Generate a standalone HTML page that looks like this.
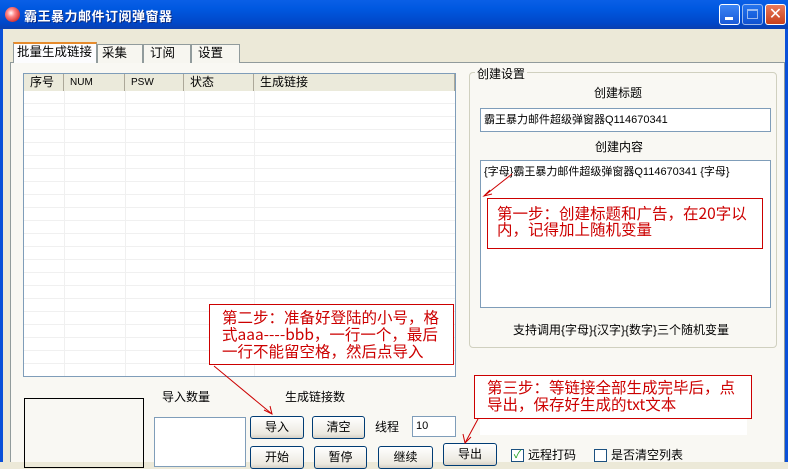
<!DOCTYPE html>
<html><head><meta charset="utf-8"><style>
*{box-sizing:border-box;margin:0;padding:0}
body{width:788px;height:462px;overflow:hidden;background:#ece9d8;font-family:"Liberation Sans","Noto Sans CJK SC",sans-serif;font-size:12px;color:#000;position:relative}
.a{position:absolute}
.tb{left:0;top:0;width:788px;height:29px;background:linear-gradient(#0a5fe6,#0058e0 30%,#0047c8 80%,#0a3fb0);}
.ttl{left:24px;top:6px;color:#fff;font-weight:bold;font-size:13px;letter-spacing:0.5px;text-shadow:1px 1px #0a2a80}
.wb{top:4px;width:21px;height:21px;border:1px solid #fff;border-radius:3px;background:linear-gradient(#3c85f5,#1a5ad8)}
.in{background:#fff;border:1px solid #7f9db9}
.btn{height:23px;border:1px solid #003c74;border-radius:3px;background:linear-gradient(#fff,#ece9e0 80%,#d6d0c5);text-align:center;line-height:21px}
.note{border:1px solid #c00;color:#c00;font-size:15.5px;line-height:16px;background:#fff;white-space:nowrap;font-family:"Noto Sans CJK SC",sans-serif}
.th{top:0;height:17px;border-right:1px solid #aca899;padding-left:6px;line-height:17px;background:#ebeadb}
.tab{top:44px;height:19px;border:1px solid #919b9c;border-bottom:none;background:#f7f6f0;padding:0 4px;line-height:17px;font-size:12.5px;white-space:nowrap;overflow:hidden}
.cb{width:13px;height:13px;border:1px solid #1c5180;background:#fff}
</style></head><body>
<div class="a tb"></div>
<div class="a" style="left:5px;top:7px;width:15px;height:15px;border-radius:50%;background:radial-gradient(circle at 40% 40%,#fff 0,#f88 30%,#c22 80%)"></div>
<div class="a ttl">霸王暴力邮件订阅弹窗器</div>
<div class="a wb" style="left:719px"><div class="a" style="left:5px;top:12px;width:8px;height:3px;background:#fff"></div></div>
<div class="a wb" style="left:742px;opacity:.6"><div class="a" style="left:4px;top:4px;width:11px;height:10px;border:1px solid #fff;border-top-width:2px"></div></div>
<div class="a wb" style="left:765px;background:linear-gradient(#e87a5a,#c8401c);color:#fff;text-align:center;font-size:16px;line-height:19px">✕</div>
<div class="a" style="left:0;top:29px;width:3px;height:433px;background:#0a50d8"></div>
<div class="a" style="left:785px;top:29px;width:3px;height:433px;background:#0a50d8"></div>

<div class="a" style="left:10px;top:62px;width:775px;height:400px;border:1px solid #919b9c;border-bottom:none;background:#f9f8f3"></div>
<div class="a tab" style="left:13px;top:42px;height:21px;width:84px;padding:0 3px;background:#fcfcfe;border-top:2px solid #e68b2c">批量生成链接</div>
<div class="a tab" style="left:97px;width:46px">采集</div>
<div class="a tab" style="left:143px;width:48px;padding-left:6px">订阅</div>
<div class="a tab" style="left:191px;width:49px;padding-left:6px">设置</div>

<div class="a in" style="left:23px;top:73px;width:433px;height:304px;border-color:#7f9db9">
 <div class="a th" style="left:0;width:40px">序号</div>
 <div class="a th" style="left:40px;width:61px;font-size:10px">NUM</div>
 <div class="a th" style="left:101px;width:59px;font-size:10px">PSW</div>
 <div class="a th" style="left:160px;width:70px">状态</div>
 <div class="a th" style="left:230px;width:201px">生成链接</div>
 <div class="a" style="left:0;top:17px;width:431px;height:285px;background:repeating-linear-gradient(#fff 0 12px,#f0f0f0 12px 13px)"></div>
 <div class="a" style="left:40px;top:17px;width:1px;height:285px;background:#f0f0f0"></div>
 <div class="a" style="left:101px;top:17px;width:1px;height:285px;background:#f0f0f0"></div>
 <div class="a" style="left:160px;top:17px;width:1px;height:285px;background:#f0f0f0"></div>
 <div class="a" style="left:230px;top:17px;width:1px;height:285px;background:#f0f0f0"></div>
</div>

<div class="a" style="left:469px;top:72px;width:308px;height:276px;border:1px solid #d0d0bf;border-radius:4px"></div>
<div class="a" style="left:475px;top:65px;background:#f9f8f3;padding:0 2px">创建设置</div>
<div class="a" style="left:594px;top:84px">创建标题</div>
<div class="a in" style="left:480px;top:108px;width:291px;height:24px;padding:2px 3px;font-size:11px">霸王暴力邮件超级弹窗器Q114670341</div>
<div class="a" style="left:595px;top:138px">创建内容</div>
<div class="a in" style="left:480px;top:160px;width:291px;height:148px;padding:2px 3px;font-size:11px">{字母}霸王暴力邮件超级弹窗器Q114670341 {字母}</div>
<div class="a note" style="left:487px;top:198px;width:276px;height:51px;padding:6px 9px">第一步：创建标题和广告，在20字以<br>内，记得加上随机变量</div>
<div class="a" style="left:513px;top:321px">支持调用{字母}{汉字}{数字}三个随机变量</div>

<div class="a" style="left:24px;top:398px;width:120px;height:70px;border:1px solid #000"></div>
<div class="a" style="left:162px;top:388px">导入数量</div>
<div class="a" style="left:285px;top:388px">生成链接数</div>
<div class="a in" style="left:154px;top:417px;width:92px;height:50px"></div>
<div class="a btn" style="left:250px;top:416px;width:54px">导入</div>
<div class="a btn" style="left:312px;top:416px;width:53px">清空</div>
<div class="a" style="left:375px;top:418px">线程</div>
<div class="a in" style="left:412px;top:416px;width:44px;height:21px;padding:3px;font-size:11px">10</div>
<div class="a in" style="left:480px;top:410px;width:267px;height:25px;border:none"></div>
<div class="a btn" style="left:250px;top:446px;width:54px">开始</div>
<div class="a btn" style="left:314px;top:446px;width:53px">暂停</div>
<div class="a btn" style="left:378px;top:446px;width:55px">继续</div>
<div class="a btn" style="left:443px;top:443px;width:54px">导出</div>
<div class="a cb" style="left:511px;top:449px;color:#21a121;font-size:11px;line-height:11px;text-align:center">✓</div>
<div class="a" style="left:528px;top:446px">远程打码</div>
<div class="a cb" style="left:594px;top:449px"></div>
<div class="a" style="left:611px;top:446px">是否清空列表</div>

<div class="a note" style="left:209px;top:304px;width:245px;height:61px;padding:4px 12px;line-height:17px">第二步：准备好登陆的小号，格<br>式aaa----bbb，一行一个，最后<br>一行不能留空格，然后点导入</div>
<div class="a note" style="left:474px;top:375px;width:278px;height:44px;padding:3px 12px;line-height:17px">第三步：等链接全部生成完毕后，点<br>导出，保存好生成的txt文本</div>
<svg class="a" style="left:0;top:0" width="788" height="462"><g stroke="#c00" stroke-width="1" fill="none">
<line x1="512" y1="174" x2="484" y2="196"/><polyline points="490,190 484,196 492,194"/>
<line x1="214" y1="366" x2="272" y2="414"/><polyline points="264,410 272,414 270,406"/>
<line x1="478" y1="419" x2="465" y2="443"/><polyline points="463,434 465,443 471,437"/>
</g></svg>
</body></html>
